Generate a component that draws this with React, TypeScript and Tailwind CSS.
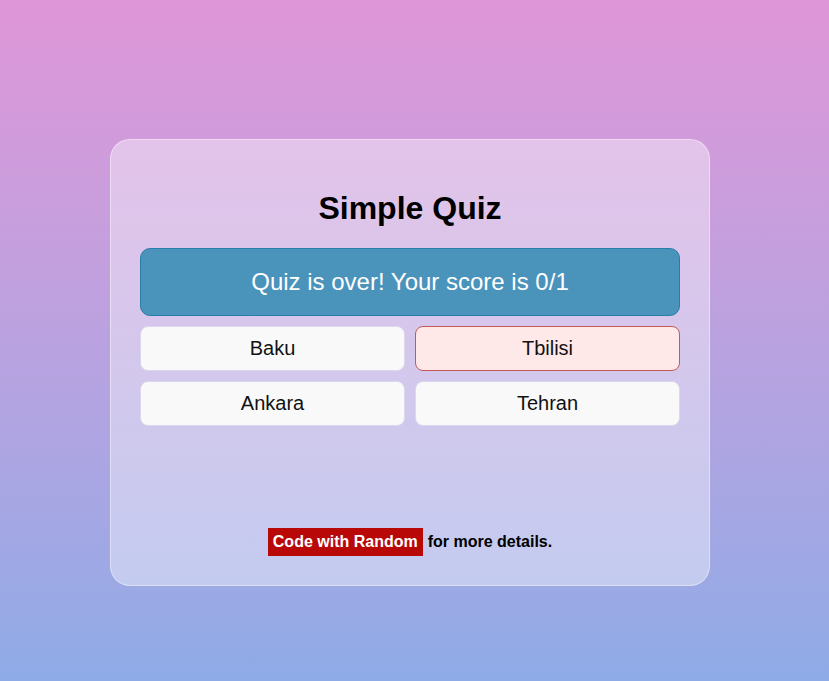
import React from "react";

export default function App() {
  const answers = [
    { t: "Baku", wrong: false },
    { t: "Tbilisi", wrong: true },
    { t: "Ankara", wrong: false },
    { t: "Tehran", wrong: false },
  ];
  return (
    <div
      className="w-full h-[681px] bg-gradient-to-b from-[#df96d8] to-[#8eabe7] pt-[139px] pr-[9px] flex justify-center"
      style={{ fontFamily: '"Liberation Sans", Arial, sans-serif' }}
    >
      <div className="w-[600px] h-[447px] rounded-[20px] border border-white/40 bg-white/40 px-[29px] pt-[30px] flex flex-col">
        <h1 className="text-[32px] font-bold text-black text-center leading-[37px] mt-[20px] mb-[20.5px]">
          Simple Quiz
        </h1>
        <div className="h-[68px] rounded-[10px] border border-[#2a7ea9] bg-[#4a93bb] text-white text-[24px] flex items-center justify-center">
          Quiz is over! Your score is 0/1
        </div>
        <div className="grid grid-cols-2 gap-[10px] mt-[10px]">
          {answers.map((a) => (
            <div
              key={a.t}
              className={
                a.wrong
                  ? "h-[45px] rounded-[8px] border border-[#c45a55] bg-[#ffe8e8] text-[20px] text-[#111] flex items-center justify-center"
                  : "h-[45px] rounded-[8px] border border-[#dcd6ee] bg-[#f9f9f9] text-[20px] text-[#111] flex items-center justify-center"
              }
            >
              {a.t}
            </div>
          ))}
        </div>
        <div className="mt-auto mb-[29px] flex items-center justify-center text-[16px] font-bold text-black">
          <span className="bg-[#b80808] text-white px-[5px] h-[28px] flex items-center">
            Code with Random
          </span>
          <span className="ml-[5px]">for more details.</span>
        </div>
      </div>
    </div>
  );
}
